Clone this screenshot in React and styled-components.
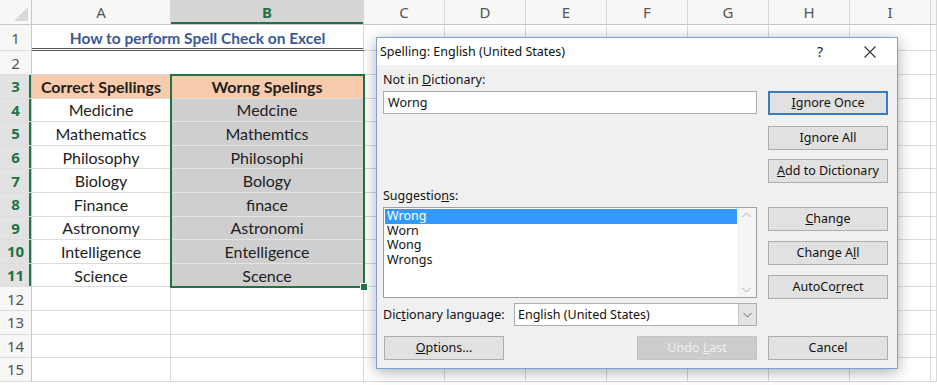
import React from 'react';
import styled, { createGlobalStyle, css } from 'styled-components';

const GREEN = '#217346';

const Global = createGlobalStyle`
  html, body { margin: 0; padding: 0; background: #fff; }
  body { width: 937px; height: 385px; overflow: hidden; }
`;

const Screen = styled.div`
  position: relative;
  width: 937px;
  height: 385px;
  overflow: hidden;
  background: #fff;
`;

const Sheet = styled.div`
  position: relative;
  display: grid;
  grid-template-columns: 32px 139px 193px repeat(7, 81px) 1fr;
  grid-template-rows: 25px 26px 24px repeat(13, 23.6px);
  font-family: Lato, "Liberation Sans", sans-serif;
`;

const Corner = styled.div`
  position: relative;
  background: #f7f7f7;
  border-right: 1px solid #c8c8c8;
  border-bottom: 1px solid #c8c8c8;
  &::after {
    content: '';
    position: absolute;
    right: 3px;
    bottom: 3px;
    border-left: 14px solid transparent;
    border-bottom: 14px solid #d8d8d8;
  }
`;

const ColHeader = styled.div`
  display: flex;
  align-items: center;
  justify-content: center;
  background: ${p => (p.$sel ? '#d6d6d6' : '#f7f7f7')};
  border-right: 1px solid #d7d7d7;
  border-bottom: 1px solid #c8c8c8;
  color: ${p => (p.$sel ? GREEN : '#555')};
  font-family: "Noto Sans", "Liberation Sans", sans-serif;
  font-size: 15px;
  font-weight: ${p => (p.$sel ? 700 : 400)};
  ${p => p.$sel && css`box-shadow: inset 0 -2px 0 ${GREEN};`}
`;

const RowHeader = styled.div`
  display: flex;
  align-items: center;
  justify-content: center;
  background: ${p => (p.$sel ? '#e2e2e2' : '#f7f7f7')};
  border-right: 1px solid #c8c8c8;
  border-bottom: 1px solid #dcdcdc;
  color: ${p => (p.$sel ? GREEN : '#555')};
  font-family: "Noto Sans", "Liberation Sans", sans-serif;
  font-size: 15px;
  font-weight: ${p => (p.$sel ? 700 : 400)};
  ${p => p.$sel && css`box-shadow: inset -2px 0 0 ${GREEN};`}
`;

const Cell = styled.div`
  display: flex;
  align-items: center;
  justify-content: center;
  overflow: hidden;
  white-space: nowrap;
  border-right: 1px solid ${p => (p.$fill === 'gray' ? '#e4e4e4' : '#dadada')};
  border-bottom: 1px solid ${p => (p.$fill === 'gray' ? '#e4e4e4' : '#dadada')};
  background: ${p =>
    p.$fill === 'peach' ? '#f8cbad' : p.$fill === 'gray' ? '#cfcfcf' : '#fff'};
  color: #1e1e1e;
  font-size: 16px;
  font-weight: ${p => (p.$bold ? 700 : 400)};
  ${p => p.$span && css`grid-column: span ${p.$span};`}
`;

const TitleCell = styled(Cell)`
  grid-column: span 2;
  color: #3b5998;
  font-weight: 700;
  font-size: 15.5px;
  border-right: 1px solid #dadada;
  border-bottom: 3px double #555;
  padding-top: 2px;
`;

const Selection = styled.div`
  position: absolute;
  left: 170px;
  top: 74px;
  width: 195px;
  height: 214px;
  box-sizing: border-box;
  border: 2px solid ${GREEN};
  pointer-events: none;
`;

const FillHandle = styled.div`
  position: absolute;
  right: -5px;
  bottom: -5px;
  width: 6px;
  height: 6px;
  background: ${GREEN};
  border: 1px solid #fff;
`;

/* ---------- Dialog ---------- */

const Dialog = styled.div`
  position: absolute;
  left: 376px;
  top: 37px;
  width: 522px;
  height: 332px;
  box-sizing: border-box;
  border: 1px solid #7aa3d3;
  background: #f0f0f0;
  box-shadow: 0 3px 14px rgba(0, 0, 0, 0.32);
  display: flex;
  flex-direction: column;
  font-family: "Noto Sans", "Liberation Sans", sans-serif;
  font-size: 12.5px;
  color: #111;
`;

const TitleBar = styled.div`
  height: 27px;
  background: #fff;
  display: flex;
  align-items: center;
  gap: 4px;
  padding: 0 4px 0 3px;
`;

const TitleText = styled.div`
  flex: 1;
  font-size: 12.5px;
  color: #111;
`;

const TitleBtn = styled.div`
  width: 46px;
  height: 26px;
  display: flex;
  align-items: center;
  justify-content: center;
  font-size: 14px;
  color: #222;
`;

const Body = styled.div`
  flex: 1;
  display: grid;
  grid-template-columns: 374px 120px;
  column-gap: 11px;
  padding-left: 6px;
  align-items: start;
`;

const Column = styled.div`
  display: flex;
  flex-direction: column;
`;

const Label = styled.div`
  line-height: 16px;
  margin-top: ${p => p.$mt || 0}px;
  white-space: nowrap;
`;

const TextBox = styled.div`
  height: 23px;
  line-height: 21px;
  box-sizing: border-box;
  margin-top: 3px;
  border: 1px solid #abadb3;
  background: #fff;
  padding: 0 4px;
`;

const Button = styled.div`
  width: 120px;
  height: 24px;
  line-height: 22px;
  box-sizing: border-box;
  flex: none;
  margin-top: ${p => p.$mt || 0}px;
  text-align: center;
  background: #e1e1e1;
  border: 1px solid #adadad;
  white-space: nowrap;
  ${p =>
    p.$primary &&
    css`
      border: 2px solid #3a7cc0;
      line-height: 20px;
    `}
  ${p =>
    p.$disabled &&
    css`
      background: #cccccc;
      border-color: #c4c4c4;
      color: #eeeeee;
    `}
`;

const ListBox = styled.div`
  height: 91px;
  margin-top: 3px;
  box-sizing: border-box;
  border: 1px solid #9a9ea6;
  background: #fff;
  display: flex;
`;

const ListItems = styled.div`
  flex: 1;
  padding: 1px 0 0 1px;
`;

const ListItem = styled.div`
  height: 14.7px;
  line-height: 14.7px;
  padding-left: 2px;
  background: ${p => (p.$selected ? '#3399ff' : 'transparent')};
  color: ${p => (p.$selected ? '#fff' : '#111')};
`;

const ScrollBar = styled.div`
  width: 19px;
  background: #f5f5f5;
  display: flex;
  flex-direction: column;
  justify-content: space-between;
  align-items: center;
  padding: 4px 0;
`;

const DictRow = styled.div`
  height: 23px;
  margin-top: 5px;
  display: flex;
  align-items: center;
`;

const DictLabel = styled.div`
  width: 131px;
  white-space: nowrap;
`;

const Select = styled.div`
  flex: 1;
  height: 23px;
  box-sizing: border-box;
  border: 1px solid #abadb3;
  background: #fff;
  display: flex;
  align-items: center;
`;

const SelectValue = styled.div`
  flex: 1;
  padding-left: 3px;
`;

const DropBtn = styled.div`
  width: 18px;
  height: 100%;
  box-sizing: border-box;
  background: #e3e3e3;
  border-left: 1px solid #c5c5c5;
  display: flex;
  align-items: center;
  justify-content: center;
`;

const BottomRow = styled.div`
  margin-top: 10px;
  display: flex;
  justify-content: space-between;
  padding-left: 1px;
`;

const Chevron = ({ up, color = '#a8a8a8' }) => (
  <svg width="9" height="6" viewBox="0 0 9 6">
    <polyline
      points={up ? '0.5,5 4.5,1 8.5,5' : '0.5,1 4.5,5 8.5,1'}
      fill="none"
      stroke={color}
      strokeWidth="1"
    />
  </svg>
);

const CloseIcon = () => (
  <svg width="12" height="12" viewBox="0 0 12 12">
    <path d="M0.5 0.5 L11.5 11.5 M11.5 0.5 L0.5 11.5" stroke="#333" strokeWidth="1.1" fill="none" />
  </svg>
);

const cols = ['A', 'B', 'C', 'D', 'E', 'F', 'G', 'H', 'I', ''];

const data = [
  ['Medicine', 'Medcine'],
  ['Mathematics', 'Mathemtics'],
  ['Philosophy', 'Philosophi'],
  ['Biology', 'Bology'],
  ['Finance', 'finace'],
  ['Astronomy', 'Astronomi'],
  ['Intelligence', 'Entelligence'],
  ['Science', 'Scence'],
];

const Empties = ({ n, prefix }) =>
  Array.from({ length: n }, (_, i) => <Cell key={`${prefix}-${i}`} />);

export default function App() {
  return (
    <Screen>
      <Global />
      <Sheet>
        <Corner />
        {cols.map((c, i) => (
          <ColHeader key={`h${i}`} $sel={c === 'B'}>
            {c}
          </ColHeader>
        ))}

        <RowHeader>1</RowHeader>
        <TitleCell>How to perform Spell Check on Excel</TitleCell>
        <Empties n={8} prefix="r1" />

        <RowHeader>2</RowHeader>
        <Cell $span={2} />
        <Empties n={8} prefix="r2" />

        <RowHeader $sel>3</RowHeader>
        <Cell $fill="peach" $bold>Correct Spellings</Cell>
        <Cell $fill="peach" $bold>Worng Spelings</Cell>
        <Empties n={8} prefix="r3" />

        {data.map(([a, b], i) => (
          <React.Fragment key={`d${i}`}>
            <RowHeader $sel>{i + 4}</RowHeader>
            <Cell>{a}</Cell>
            <Cell $fill="gray">{b}</Cell>
            <Empties n={8} prefix={`d${i}`} />
          </React.Fragment>
        ))}

        {[12, 13, 14, 15].map(r => (
          <React.Fragment key={`e${r}`}>
            <RowHeader>{r}</RowHeader>
            <Empties n={10} prefix={`e${r}`} />
          </React.Fragment>
        ))}

        <Selection>
          <FillHandle />
        </Selection>
      </Sheet>

      <Dialog>
        <TitleBar>
          <TitleText>Spelling: English (United States)</TitleText>
          <TitleBtn>?</TitleBtn>
          <TitleBtn>
            <CloseIcon />
          </TitleBtn>
        </TitleBar>
        <Body>
          <Column>
            <Label $mt={7}>
              Not in <u>D</u>ictionary:
            </Label>
            <TextBox>Worng</TextBox>
            <Label $mt={74}>
              Suggestio<u>n</u>s:
            </Label>
            <ListBox>
              <ListItems>
                <ListItem $selected>Wrong</ListItem>
                <ListItem>Worn</ListItem>
                <ListItem>Wong</ListItem>
                <ListItem>Wrongs</ListItem>
              </ListItems>
              <ScrollBar>
                <Chevron up />
                <Chevron />
              </ScrollBar>
            </ListBox>
            <DictRow>
              <DictLabel>
                Dic<u>t</u>ionary language:
              </DictLabel>
              <Select>
                <SelectValue>English (United States)</SelectValue>
                <DropBtn>
                  <Chevron color="#666" />
                </DropBtn>
              </Select>
            </DictRow>
            <BottomRow>
              <Button>
                <u>O</u>ptions...
              </Button>
              <Button $disabled>
                Undo <u>L</u>ast
              </Button>
            </BottomRow>
          </Column>
          <Column>
            <Button $mt={26} $primary>
              <u>I</u>gnore Once
            </Button>
            <Button $mt={11}>
              I<u>g</u>nore All
            </Button>
            <Button $mt={9}>
              <u>A</u>dd to Dictionary
            </Button>
            <Button $mt={24}>
              <u>C</u>hange
            </Button>
            <Button $mt={10}>
              Change A<u>l</u>l
            </Button>
            <Button $mt={10}>
              AutoCo<u>r</u>rect
            </Button>
            <Button $mt={37}>Cancel</Button>
          </Column>
        </Body>
      </Dialog>
    </Screen>
  );
}
